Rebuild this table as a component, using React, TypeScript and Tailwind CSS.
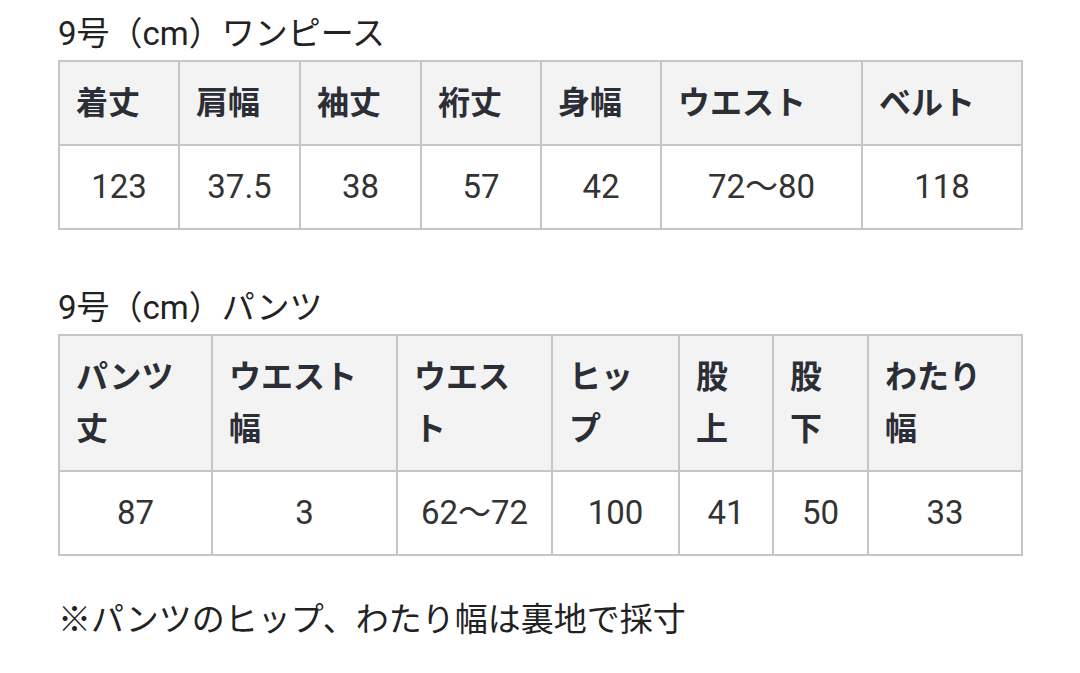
import React from "react";

type SizeTable = {
  title: string;
  widths: number[];
  headers: string[];
  values: string[];
};

const tables: SizeTable[] = [
  {
    title: "9号（cm）ワンピース",
    widths: [120, 121, 121, 120, 120, 201, 160],
    headers: ["着丈", "肩幅", "袖丈", "裄丈", "身幅", "ウエスト", "ベルト"],
    values: ["123", "37.5", "38", "57", "42", "72〜80", "118"],
  },
  {
    title: "9号（cm）パンツ",
    widths: [153, 185, 155, 127, 94, 95, 154],
    headers: ["パンツ丈", "ウエスト幅", "ウエスト", "ヒップ", "股上", "股下", "わたり幅"],
    values: ["87", "3", "62〜72", "100", "41", "50", "33"],
  },
];

function SizeTableView({ table }: { table: SizeTable }) {
  return (
    <section>
      <h2 className="text-[33px] leading-[48px] font-normal text-[#222]">{table.title}</h2>
      <table className="mt-[2px] table-fixed border-collapse border-2 border-[#c6c6c6] w-[963px]">
        <colgroup>
          {table.widths.map((w, i) => (
            <col key={i} style={{ width: w }} />
          ))}
        </colgroup>
        <thead>
          <tr className="bg-[#f3f3f3]">
            {table.headers.map((h, i) => (
              <th
                key={i}
                className="border-2 border-[#c6c6c6] px-4 py-[15px] text-left align-top font-bold text-[32px] leading-[52px] text-[#2b2e35]"
              >
                {h}
              </th>
            ))}
          </tr>
        </thead>
        <tbody>
          <tr className="bg-white">
            {table.values.map((v, i) => (
              <td
                key={i}
                className="border-2 border-[#c6c6c6] px-2 py-[15px] text-center text-[33px] leading-[52px] text-[#333]"
              >
                {v}
              </td>
            ))}
          </tr>
        </tbody>
      </table>
    </section>
  );
}

export default function App() {
  return (
    <div
      className="min-h-screen bg-white pl-[58px] pt-[10px] text-[#222]"
      style={{ fontFamily: '"Roboto", "Noto Sans CJK JP", sans-serif' }}
    >
      <SizeTableView table={tables[0]} />
      <div className="mt-[54px]">
        <SizeTableView table={tables[1]} />
      </div>
      <p className="mt-[40px] text-[33px] leading-[48px] text-[#222]">
        ※パンツのヒップ、わたり幅は裏地で採寸
      </p>
    </div>
  );
}
